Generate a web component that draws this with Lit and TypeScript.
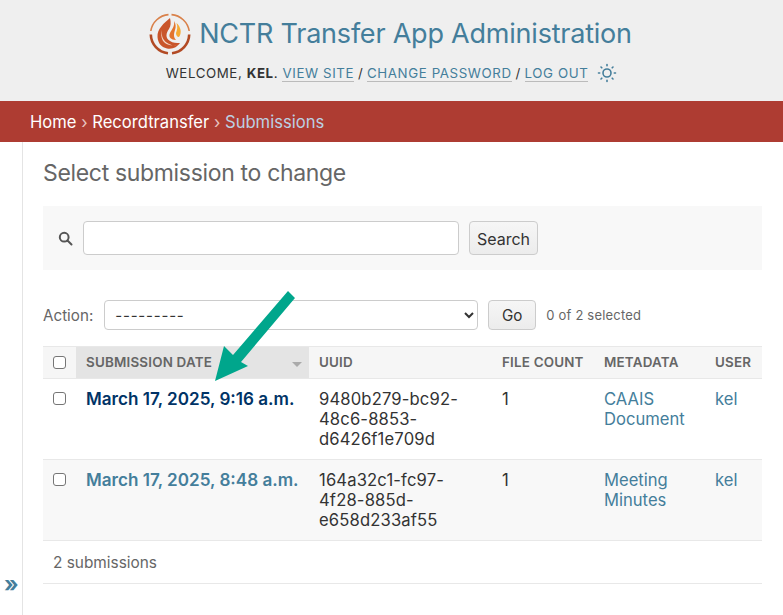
import { css, html, LitElement } from "lit";
import { customElement } from "lit/decorators.js";

const rows = [
  {
    date: "March 17, 2025, 9:16 a.m.",
    uuid: ["9480b279-bc92-", "48c6-8853-", "d6426f1e709d"],
    count: "1",
    meta: ["CAAIS", "Document"],
    visited: true,
  },
  {
    date: "March 17, 2025, 8:48 a.m.",
    uuid: ["164a32c1-fc97-", "4f28-885d-", "e658d233af55"],
    count: "1",
    meta: ["Meeting", "Minutes"],
    visited: false,
  },
];

@customElement("app-root")
export class AppRoot extends LitElement {
  static styles = css`
    :host {
      display: block;
      position: relative;
      height: 615px;
      overflow: hidden;
      background: #fff;
      color: #333;
      font-family: Inter, "Liberation Sans", sans-serif;
      font-size: 16px;
    }

    a {
      color: #447e9b;
      text-decoration: none;
    }

    .header {
      height: 101px;
      box-sizing: border-box;
      background: #efefef;
      display: flex;
      flex-direction: column;
      align-items: center;
      padding-top: 13px;
    }

    .brand {
      display: flex;
      align-items: center;
      gap: 8px;
      height: 41px;
      margin-right: 2px;
      font-size: 27px;
      letter-spacing: -0.22px;
      color: #447e9b;
    }

    .tools {
      display: flex;
      align-items: center;
      margin-top: 8px;
      font-size: 13.3px;
      letter-spacing: 0.6px;
      color: #333;
      white-space: pre;
      text-transform: uppercase;
      height: 22px;
    }

    .tools a {
      border-bottom: 1px solid #bbb;
      line-height: 16px;
    }

    .tools b {
      font-weight: 700;
    }

    .tools .sep {
      letter-spacing: 0.2px;
    }

    .tools svg {
      margin-left: 9px;
    }

    .crumbs {
      height: 41px;
      box-sizing: border-box;
      background: #ae3c32;
      padding-left: 30px;
      display: flex;
      align-items: center;
      color: #e8c4c0;
      white-space: pre;
      font-size: 16.6px;
    }

    .crumbs a {
      color: #fff;
    }

    .crumbs span {
      color: #bcd0e2;
    }

    .main {
      display: flex;
      height: 473px;
    }

    .toggle {
      width: 22px;
      border-right: 1px solid #e4e4e4;
      position: relative;
      flex: none;
    }

    .toggle span {
      position: absolute;
      left: 4px;
      top: 428px;
      color: #447e9b;
      font-size: 22px;
      font-weight: 700;
      line-height: 28px;
    }

    .content {
      margin-left: 20px;
      width: 719px;
    }

    h1 {
      margin: 0;
      font-size: 23px;
      letter-spacing: -0.33px;
      line-height: 30px;
      font-weight: 400;
      color: #666;
      padding-top: 16px;
      height: 48px;
    }

    .search {
      height: 64px;
      background: #f8f8f8;
      display: flex;
      align-items: center;
      padding-left: 15px;
      box-sizing: border-box;
    }

    .search svg {
      margin-right: 10px;
    }

    input.text {
      width: 376px;
      height: 34px;
      box-sizing: border-box;
      border: 1px solid #ccc;
      border-radius: 4px;
      background: #fff;
      margin: 0 10px 0 0;
    }

    .btn {
      width: 69px;
      height: 34px;
      box-sizing: border-box;
      border: 1px solid #ccc;
      border-radius: 4px;
      background: linear-gradient(#f6f6f6, #ececec);
      color: #333;
      font: inherit;
      padding: 1px 0 0;
    }

    .actions {
      display: flex;
      align-items: center;
      height: 30px;
      margin-top: 30px;
      font-size: 15.2px;
      color: #666;
    }

    .actions select {
      width: 374px;
      height: 30px;
      margin: 0 10px 0 11px;
      border: 1px solid #ccc;
      border-radius: 4px;
      background: #fff;
      color: #333;
      font: 15px Inter, "Liberation Sans", sans-serif;
      letter-spacing: 0.8px;
      padding-left: 6px;
    }

    .actions .btn {
      height: 30px;
      width: 48px;
    }

    .actions .count {
      margin-left: 10px;
      font-size: 13px;
      letter-spacing: 0.2px;
    }

    table {
      border-collapse: collapse;
      table-layout: fixed;
      width: 719px;
      margin-top: 16px;
    }

    th {
      height: 32px;
      padding: 0 10px 1px;
      box-sizing: border-box;
      background: #f6f6f6;
      border-top: 1px solid #e8e8e8;
      border-bottom: 1px solid #e8e8e8;
      text-align: left;
      font-size: 13.4px;
      font-weight: 600;
      color: #666;
      letter-spacing: 0.2px;
      white-space: nowrap;
    }

    th.sorted {
      background: #e4e4e4;
      position: relative;
    }

    th.sorted i {
      position: absolute;
      right: 7px;
      top: 15px;
      border-left: 5px solid transparent;
      border-right: 5px solid transparent;
      border-top: 5px solid #aaa;
    }

    td {
      height: 81px;
      box-sizing: border-box;
      padding: 10px 10px 0;
      vertical-align: top;
      font-size: 16.6px;
      line-height: 20px;
      border-bottom: 1px solid #e8e8e8;
    }

    td.uuid {
      letter-spacing: 0.15px;
    }

    tr.alt td {
      background: #f8f8f8;
    }

    td.date a {
      font-weight: 600;
      font-size: 17.1px;
      white-space: nowrap;
    }

    td.date a.visited {
      color: #003366;
    }

    .check {
      width: 13px;
      height: 13px;
      margin: 0;
      display: block;
      appearance: none;
      border: 1px solid #767676;
      border-radius: 3px;
      background: #fff;
    }

    td .check {
      margin-top: 3px;
    }

    .paginator {
      height: 43px;
      box-sizing: border-box;
      border-bottom: 1px solid #e8e8e8;
      padding-left: 10px;
      display: flex;
      align-items: center;
      font-size: 15.4px;
      color: #666;
    }

    .arrow {
      position: absolute;
      left: 0;
      top: 0;
      pointer-events: none;
    }
  `;

  private logo() {
    return html`<svg width="42" height="42" viewBox="0 0 42 42">
      <g fill="none" stroke-width="1.6" stroke="#d9814a">
        <path d="M1.800 18 A19.500 19.500 0 0 1 19.500 1.600" />
        <path d="M22.500 1.600 A19.500 19.500 0 0 1 40.200 18" />
      </g>
      <g fill="none" stroke-width="2.600" stroke="#b24a24">
        <path d="M1.800 21.500 A19.300 19.300 0 0 0 19 40.200" />
        <path d="M23 40.200 A19.300 19.300 0 0 0 40.200 21.500" />
      </g>
      <path
        d="M21 5 C15 10 8 16 8.500 24 C9 30 12 34 18 35.500 C24 36.500 28 34 31 30 C27 30 24 30 21 28 C16 25 17 20 20 16 C22 13 22 9 21 5Z"
        fill="#c9552a"
      />
      <path
        d="M25 8 C26 13 23 16 21 20 C19 24 22 27 27 27 C24 24 25 20 26 17 C27 14 27 11 25 8Z"
        fill="#e2742e"
      />
      <path d="M27.500 10 C29 14 28 17 27 20 C27 22 28 24 30 24 C33 20 32 14 27.500 10Z" fill="#f6ab32" />
      <path
        d="M13 17 C12 23 14 28 20 31 C24 33 27 32 29 31.500 C23 33.500 16 32 13.500 27 C12 24 12 20 13 17Z"
        fill="#f3d9c8"
      />
    </svg>`;
  }

  private sun() {
    return html`<svg
      width="20"
      height="20"
      viewBox="0 0 20 20"
      fill="none"
      stroke="#447e9b"
      stroke-width="1.6"
      stroke-linecap="round"
    >
      <circle cx="10" cy="10" r="4" />
      <path
        d="M10 1.500v1.200M10 17.300v1.200M1.500 10h1.200M17.300 10h1.200M4 4l.8.8M15.200 15.200l.8.8M4 16l.8-.8M15.200 4.800l.8-.8"
      />
    </svg>`;
  }

  render() {
    return html`
      <div class="header">
        <div class="brand">${this.logo()}<span>NCTR Transfer App Administration</span></div>
        <div class="tools">
          <span>Welcome, <b>kel</b>. </span><a href="#">View site</a><span class="sep"> / </span
          ><a href="#">Change password</a><span class="sep"> / </span><a href="#">Log out</a>${this.sun()}
        </div>
      </div>
      <div class="crumbs">
        <a href="#">Home</a> › <a href="#">Recordtransfer</a> › <span>Submissions</span>
      </div>
      <div class="main">
        <div class="toggle"><span>»</span></div>
        <div class="content">
          <h1>Select submission to change</h1>
          <div class="search">
            <svg width="15" height="15" viewBox="0 0 15 15" fill="none" stroke="#555" stroke-width="2">
              <circle cx="6.200" cy="6.200" r="4.400" />
              <path d="M9.500 9.500L13.500 13.500" stroke-linecap="round" />
            </svg>
            <input class="text" type="text" />
            <button class="btn">Search</button>
          </div>
          <div class="actions">
            <span>Action:</span>
            <select><option>---------</option></select>
            <button class="btn">Go</button>
            <span class="count">0 of 2 selected</span>
          </div>
          <table>
            <colgroup>
              <col style="width:33px" />
              <col style="width:233px" />
              <col style="width:183px" />
              <col style="width:102px" />
              <col style="width:111px" />
              <col style="width:57px" />
            </colgroup>
            <thead>
              <tr>
                <th><input class="check" type="checkbox" /></th>
                <th class="sorted">SUBMISSION DATE<i></i></th>
                <th>UUID</th>
                <th>FILE COUNT</th>
                <th>METADATA</th>
                <th>USER</th>
              </tr>
            </thead>
            <tbody>
              ${rows.map(
                (r, i) => html`<tr class=${i % 2 ? "alt" : ""}>
                  <td><input class="check" type="checkbox" /></td>
                  <td class="date"><a href="#" class=${r.visited ? "visited" : ""}>${r.date}</a></td>
                  <td class="uuid">${r.uuid.map((u) => html`${u}<br />`)}</td>
                  <td>${r.count}</td>
                  <td><a href="#">${r.meta[0]}<br />${r.meta[1]}</a></td>
                  <td><a href="#">kel</a></td>
                </tr>`
              )}
            </tbody>
          </table>
          <div class="paginator">2 submissions</div>
        </div>
      </div>
      <svg class="arrow" width="783" height="615" viewBox="0 0 783 615">
        <polygon points="288,291 295,298 241,362 248,366 215,381 224,346 233,355" fill="#00a68c" />
      </svg>
    `;
  }
}
